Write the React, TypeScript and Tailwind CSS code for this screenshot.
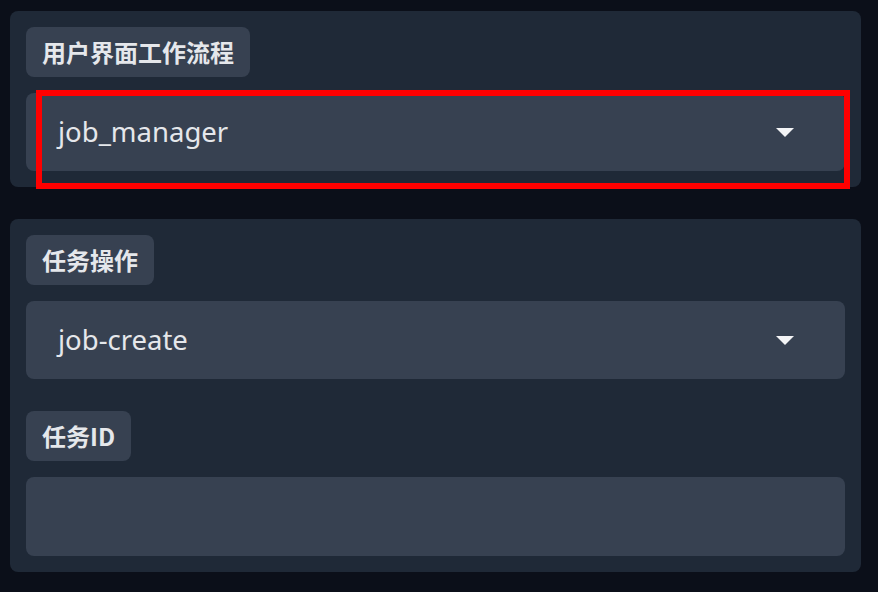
import { ReactNode } from "react"

const font = { fontFamily: '"Noto Sans", "Noto Sans CJK SC", sans-serif' }
const cjk = { fontFamily: '"Noto Sans CJK SC", "Noto Sans", sans-serif' }

function Label({ children }: { children: ReactNode }) {
  return (
    <div className="flex">
      <span
        className="h-[50px] px-4 flex items-center rounded-lg bg-[#374151] text-[24px] font-bold text-[#e5e7eb]"
        style={cjk}
      >
        {children}
      </span>
    </div>
  )
}

function Select({ value }: { value: string }) {
  return (
    <div className="h-[78px] rounded-lg bg-[#374151] flex items-center pl-8 pr-[51px]">
      <span className="flex-1 text-[27.5px] text-[#e5e7eb]">{value}</span>
      <svg width="18" height="9" viewBox="0 0 18 9">
        <path d="M0 0 L18 0 L9 9 Z" fill="#f3f4f6" />
      </svg>
    </div>
  )
}

export default function App() {
  return (
    <div className="min-h-[592px] bg-[#0b0f19] pl-[10px] pt-[11px] pb-5" style={font}>
      <div className="w-[851px] flex flex-col gap-8">
        {/* Workflow */}
        <div className="relative rounded-lg bg-[#1f2937] p-4 flex flex-col gap-4">
          <Label>用户界面工作流程</Label>
          <Select value="job_manager" />
          <div className="absolute left-[26px] top-[79px] w-[814px] h-[99px] border-[6px] border-[#ff0000]" />
        </div>

        {/* Job */}
        <div className="rounded-lg bg-[#1f2937] p-4 flex flex-col">
          <Label>任务操作</Label>
          <div className="mt-4">
            <Select value="job-create" />
          </div>
          <div className="mt-8">
            <Label>任务ID</Label>
          </div>
          <div className="mt-4 h-[79px] rounded-lg bg-[#374151]" />
        </div>
      </div>
    </div>
  )
}
